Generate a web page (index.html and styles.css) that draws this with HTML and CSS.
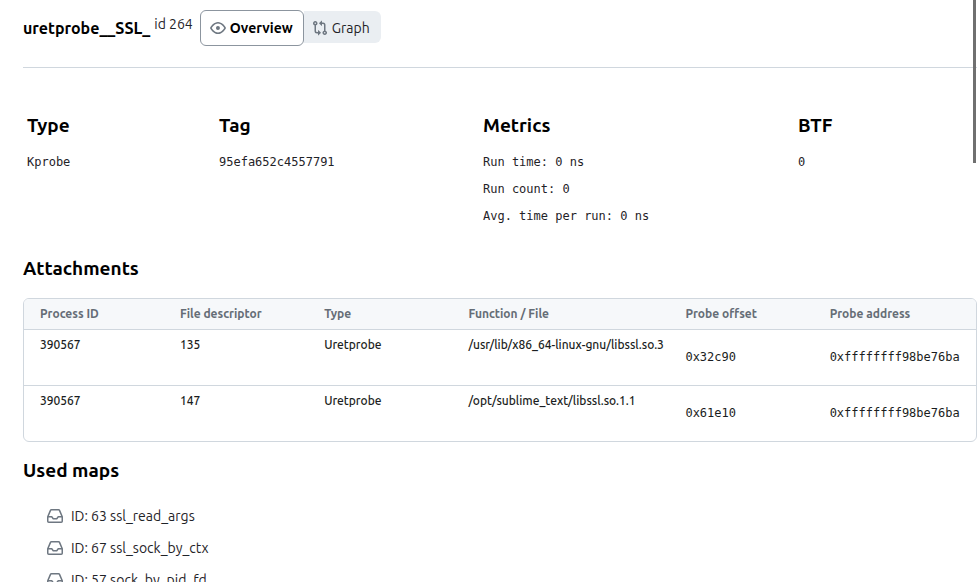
FILE: index.html
```html
<!DOCTYPE html>
<html lang="en">
<head>
<meta charset="utf-8">
<title>uretprobe__SSL_</title>
<link rel="stylesheet" href="styles.css">
</head>
<body>
<main class="page">
  <header class="header">
    <h1 class="title">uretprobe__SSL_</h1>
    <span class="program-id">id 264</span>
    <div class="segments">
      <button type="button" class="segment selected" aria-pressed="true">
        <svg class="icon" viewBox="0 0 16 16" aria-hidden="true"><path d="M8 2c1.981 0 3.671.992 4.933 2.078 1.27 1.091 2.187 2.345 2.637 3.023a1.62 1.62 0 0 1 0 1.798c-.45.678-1.367 1.932-2.637 3.023C11.67 13.008 9.981 14 8 14c-1.981 0-3.671-.992-4.933-2.078C1.797 10.83.88 9.576.43 8.898a1.62 1.62 0 0 1 0-1.798c.45-.677 1.367-1.931 2.637-3.022C4.33 2.992 6.019 2 8 2ZM1.679 7.932a.12.12 0 0 0 0 .136c.411.622 1.241 1.75 2.366 2.717C5.176 11.758 6.527 12.5 8 12.5c1.473 0 2.825-.742 3.955-1.715 1.124-.967 1.954-2.096 2.366-2.717a.12.12 0 0 0 0-.136c-.412-.621-1.242-1.75-2.366-2.717C10.824 4.242 9.473 3.5 8 3.5c-1.473 0-2.825.742-3.955 1.715-1.124.967-1.954 2.096-2.366 2.717ZM8 10a2 2 0 1 1-.001-3.999A2 2 0 0 1 8 10Z"/></svg>
        Overview
      </button>
      <button type="button" class="segment" aria-pressed="false">
        <svg class="icon" viewBox="0 0 16 16" aria-hidden="true"><path fill-rule="evenodd" d="M9.573.677A.25.25 0 0 1 10 .854V2.5h1A2.5 2.5 0 0 1 13.5 5v5.628a2.251 2.251 0 1 1-1.5 0V5a1 1 0 0 0-1-1h-1v1.646a.25.25 0 0 1-.427.177L7.177 3.427a.25.25 0 0 1 0-.354ZM6 12v-1.646a.25.25 0 0 1 .427-.177l2.396 2.396a.25.25 0 0 1 0 .354l-2.396 2.396A.25.25 0 0 1 6 15.146V13.5H5A2.5 2.5 0 0 1 2.5 11V5.372a2.25 2.25 0 1 1 1.5 0V11a1 1 0 0 0 1 1ZM4 3.25a.75.75 0 1 0-1.5 0 .75.75 0 0 0 1.5 0ZM13.5 12.75a.75.75 0 1 0-1.5 0 .75.75 0 0 0 1.5 0Z"/></svg>
        Graph
      </button>
    </div>
  </header>

  <section class="facts">
    <div>
      <h2>Type</h2>
      <p>Kprobe</p>
    </div>
    <div>
      <h2>Tag</h2>
      <p>95efa652c4557791</p>
    </div>
    <div>
      <h2>Metrics</h2>
      <p>Run time: 0 ns</p>
      <p>Run count: 0</p>
      <p>Avg. time per run: 0 ns</p>
    </div>
    <div>
      <h2>BTF</h2>
      <p>0</p>
    </div>
  </section>

  <section class="attachments">
    <h2 id="attachments">Attachments</h2>
    <table class="table" aria-labelledby="attachments">
      <colgroup>
        <col class="col-pid"><col class="col-mid"><col class="col-mid"><col class="col-file"><col class="col-mid"><col class="col-address">
      </colgroup>
      <thead>
        <tr><th>Process ID</th><th>File descriptor</th><th>Type</th><th>Function / File</th><th>Probe offset</th><th>Probe address</th></tr>
      </thead>
      <tbody>
        <tr><td>390567</td><td>135</td><td>Uretprobe</td><td>/usr/lib/x86_64-linux-gnu/libssl.so.3</td><td><p>0x32c90</p></td><td><p>0xffffffff98be76ba</p></td></tr>
        <tr><td>390567</td><td>147</td><td>Uretprobe</td><td>/opt/sublime_text/libssl.so.1.1</td><td><p>0x61e10</p></td><td><p>0xffffffff98be76ba</p></td></tr>
      </tbody>
    </table>
  </section>

  <section class="maps">
    <h2>Used maps</h2>
    <ul class="map-list">
      <li><svg class="icon" viewBox="0 0 16 16" aria-hidden="true"><path id="inbox" d="M2.8 2.06A1.75 1.75 0 0 1 4.41 1h7.18c.7 0 1.333.417 1.61 1.06l2.74 6.395c.04.093.06.194.06.295v4.5A1.75 1.75 0 0 1 14.25 15H1.75A1.75 1.75 0 0 1 0 13.25v-4.5c0-.101.02-.202.06-.295Zm1.61.44a.25.25 0 0 0-.23.152L1.887 8H4.75a.75.75 0 0 1 .6.3L6.625 10h2.75l1.275-1.7a.75.75 0 0 1 .6-.3h2.863L11.82 2.652a.25.25 0 0 0-.23-.152Zm10.09 7h-2.875l-1.275 1.7a.75.75 0 0 1-.6.3h-3.5a.75.75 0 0 1-.6-.3L4.375 9.5H1.5v3.75c0 .138.112.25.25.25h12.5a.25.25 0 0 0 .25-.25Z"/></svg>ID: 63 ssl_read_args</li>
      <li><svg class="icon" viewBox="0 0 16 16" aria-hidden="true"><use href="#inbox"/></svg>ID: 67 ssl_sock_by_ctx</li>
      <li><svg class="icon" viewBox="0 0 16 16" aria-hidden="true"><use href="#inbox"/></svg>ID: 57 sock_by_pid_fd</li>
    </ul>
  </section>
</main>
<div class="scroll-thumb"></div>
</body>
</html>
```
FILE: styles.css
```css
* {
  box-sizing: border-box;
}

body {
  margin: 0;
  height: 100vh;
  overflow: hidden;
  position: relative;
  background: #fff;
  color: #1f2328;
  font: 14px/20px Ubuntu, "Noto Sans", sans-serif;
}

.page {
  padding-left: 23px;
}

h1,
h2,
p,
ul {
  margin: 0;
  padding: 0;
}

h2 {
  color: #000;
  font-size: 19px;
  line-height: 28px;
  font-weight: 700;
}

p {
  font: 12px/27px "DejaVu Sans Mono", monospace;
}

.icon {
  width: 16px;
  height: 16px;
  flex: none;
  fill: #6e7781;
}

.header {
  display: flex;
  align-items: flex-start;
  height: 68px;
  padding-top: 10px;
  border-bottom: 1px solid #d0d7de;
}

.title {
  margin-top: 4px;
  color: #000;
  font-size: 16px;
  line-height: 28px;
  font-weight: 700;
}

.program-id {
  margin: 4px 7px 0 4px;
  font-size: 14px;
}

.segments {
  display: flex;
  align-items: flex-start;
}

.segment {
  display: flex;
  align-items: center;
  gap: 4px;
  height: 32px;
  margin-top: 1px;
  padding: 2px 11px 0 8px;
  border: 0;
  border-radius: 0 6px 6px 0;
  background: #eaeef2;
  color: #1f2328;
  font: inherit;
}

.segment.selected {
  height: 36px;
  margin-top: 0;
  padding: 0 10px 0 9px;
  border: 1px solid #8c959f;
  border-radius: 6px;
  background: #fff;
  color: #000;
  font-weight: 700;
}

.facts {
  display: grid;
  grid-template-columns: 192fr 264fr 315fr 179fr;
  padding: 43px 0 0 4px;
}

.facts h2 {
  margin-bottom: 10px;
}

.attachments {
  padding-top: 24px;
}

.table {
  width: 100%;
  margin-top: 16px;
  border: 1px solid #d0d7de;
  border-radius: 6px;
  border-spacing: 0;
  table-layout: fixed;
  overflow: hidden;
  font-size: 12px;
}

.col-pid { width: 14.7%; }
.col-mid { width: 15.15%; }
.col-file { width: 22.8%; }
.col-address { width: 17.05%; }

.table th,
.table td {
  padding: 0 0 0 16px;
  text-align: left;
  white-space: nowrap;
}

.table th {
  height: 30px;
  background: #f6f8fa;
  color: #656d76;
  font-weight: 600;
}

.table td {
  height: 56px;
  padding-top: 5px;
  border-top: 1px solid #d0d7de;
  vertical-align: top;
  color: #1a1d21;
  font-weight: 500;
}

.table td p {
  padding-top: 9px;
}

.maps {
  padding-top: 14px;
}

.map-list {
  padding: 16px 0 0 24px;
  list-style: none;
}

.map-list li {
  display: flex;
  align-items: center;
  gap: 8px;
  height: 32px;
}

.scroll-thumb {
  position: absolute;
  top: 0;
  right: 1px;
  width: 3px;
  height: 28vh;
  background: #707070;
}
```
